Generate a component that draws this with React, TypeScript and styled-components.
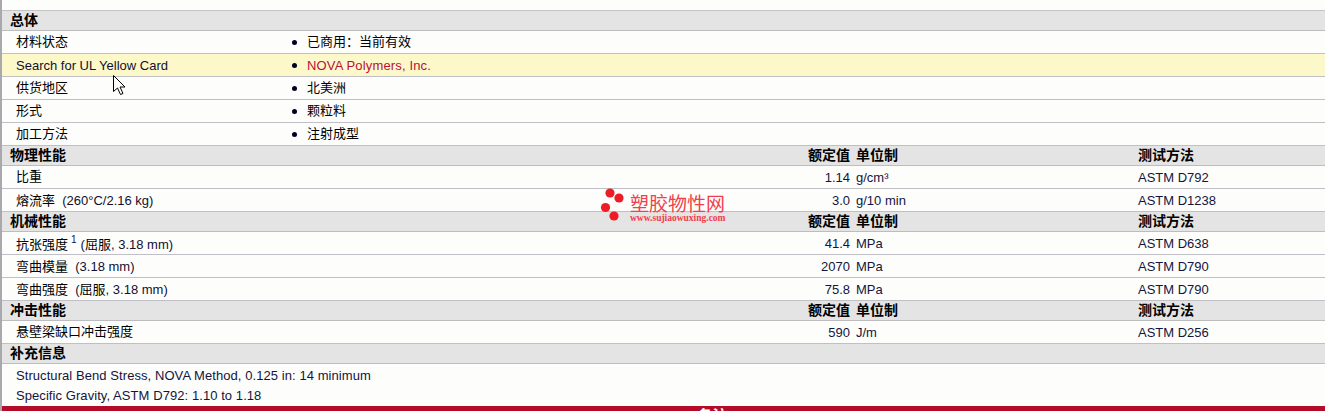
import styled, { createGlobalStyle } from "styled-components"

const GlobalStyle = createGlobalStyle`
    html, body {
        margin: 0;
        padding: 0;
        background: #fdfefc;
    }
`

const Page = styled.div`
    position: relative;
    width: 1325px;
    height: 411px;
    overflow: hidden;
    box-sizing: border-box;
    padding: 10px 0 0 2px;
    background: #fdfefc;
    font-family: "Liberation Sans", "Noto Sans CJK SC", sans-serif;
    font-size: 13px;
    color: #14143c;
`

const LeftEdge = styled.div`
    position: absolute;
    left: 0;
    top: 0;
    bottom: 0;
    width: 2px;
    background: #a9a9ad;
`

const Section = styled.div<{ $first?: boolean }>`
    display: grid;
    grid-template-columns: 690px 150px 288px 1fr;
    height: ${(p) => (p.$first ? "21px" : "20px")};
    box-sizing: border-box;
    align-items: center;
    padding: 0 0 3px 8px;
    background: #e4e4e4;
    border-top: ${(p) => (p.$first ? "1px solid #c4c4c6" : "0")};
    border-bottom: 1px solid #bdbdc0;
    font-family: "Noto Sans CJK SC", sans-serif;
    font-weight: 700;
    font-size: 14px;
    line-height: 16px;
    color: #000;
`

const HeadValue = styled.span`
    text-align: right;
    white-space: nowrap;
`

const HeadUnit = styled.span`
    padding-left: 6px;
    white-space: nowrap;
`

const InfoRow = styled.div<{ $highlight?: boolean }>`
    display: grid;
    grid-template-columns: 276px 1fr;
    height: 23px;
    box-sizing: border-box;
    align-items: center;
    padding-left: 14px;
    border-bottom: 1px solid #c0bfc6;
    background: ${(p) => (p.$highlight ? "#fdf8ca" : "transparent")};
`

const DataRow = styled.div`
    display: grid;
    grid-template-columns: 684px 150px 288px 1fr;
    height: 23px;
    box-sizing: border-box;
    align-items: center;
    padding-left: 14px;
    border-bottom: 1px solid #c0bfc6;
`

const Label = styled.span`
    color: #101030;
    white-space: nowrap;
`

const MixedLabel = styled(Label)`
    margin-bottom: 2px;
`

const CjkText = styled.span`
    font-family: "Noto Sans CJK SC", sans-serif;
    color: #000;
    margin-bottom: 3px;
`

const Sup = styled.sup`
    font-size: 10px;
    color: #14143c;
    line-height: 0;
    margin: 0 4px 0 3px;
`

const Bullet = styled.span`
    display: flex;
    align-items: center;
    gap: 10px;
    white-space: nowrap;

    &::before {
        content: "";
        width: 5px;
        height: 5px;
        border-radius: 50%;
        background: #000020;
    }
`

const Supplier = styled.span`
    color: #b8103a;
    letter-spacing: 0.15px;
`

const Value = styled.span`
    text-align: right;
    white-space: nowrap;
`

const Unit = styled.span`
    padding-left: 6px;
    white-space: nowrap;
`

const NoteGroup = styled.div`
    padding-top: 2px;
`

const Note = styled.div`
    height: 20px;
    line-height: 20px;
    padding-left: 14px;
    letter-spacing: 0.07px;
    white-space: nowrap;
`

const Footer = styled.div`
    position: absolute;
    left: 2px;
    right: 0;
    top: 406px;
    height: 20px;
    padding-left: 98px;
    background: #b40c28;
    color: #fff;
    text-align: center;
    font-family: "Noto Sans CJK SC", sans-serif;
    font-weight: 700;
    font-size: 15px;
    line-height: 18px;
`

const Watermark = styled.div`
    position: absolute;
    left: 600px;
    top: 188px;
    display: flex;
    gap: 4px;
    color: #f0404c;
`

const WatermarkText = styled.div`
    display: flex;
    flex-direction: column;
    padding-top: 4px;
`

const WatermarkName = styled.span`
    font-family: "Noto Sans CJK SC", sans-serif;
    font-size: 19px;
    line-height: 22px;
    font-weight: 400;
    white-space: nowrap;
`

const WatermarkUrl = styled.span`
    font-family: "Liberation Serif", serif;
    font-size: 9.5px;
    font-weight: 700;
    line-height: 9px;
    white-space: nowrap;
`

const Cursor = styled.svg`
    position: absolute;
    left: 113px;
    top: 75px;
`

function Dots() {
    return (
        <svg width="26" height="34" viewBox="0 0 26 34">
            <circle cx="10" cy="5" r="4.6" fill="#ee1c25" />
            <circle cx="19" cy="10" r="4.6" fill="#ee1c25" />
            <circle cx="5.5" cy="19.5" r="4.6" fill="#ee1c25" />
            <circle cx="14" cy="28" r="4.6" fill="#ee1c25" />
        </svg>
    )
}

const head = (
    <>
        <HeadValue>额定值</HeadValue>
        <HeadUnit>单位制</HeadUnit>
        <span>测试方法</span>
    </>
)

export default function App() {
    return (
        <Page>
            <GlobalStyle />
            <LeftEdge />
            <Section $first><span>总体</span></Section>
            <InfoRow><CjkText>材料状态</CjkText><Bullet><CjkText>已商用：当前有效</CjkText></Bullet></InfoRow>
            <InfoRow $highlight><Label>Search for UL Yellow Card</Label><Bullet><Supplier>NOVA Polymers, Inc.</Supplier></Bullet></InfoRow>
            <InfoRow><CjkText>供货地区</CjkText><Bullet><CjkText>北美洲</CjkText></Bullet></InfoRow>
            <InfoRow><CjkText>形式</CjkText><Bullet><CjkText>颗粒料</CjkText></Bullet></InfoRow>
            <InfoRow><CjkText>加工方法</CjkText><Bullet><CjkText>注射成型</CjkText></Bullet></InfoRow>

            <Section><span>物理性能</span>{head}</Section>
            <DataRow><CjkText>比重</CjkText><Value>1.14</Value><Unit>g/cm³</Unit><span>ASTM D792</span></DataRow>
            <DataRow><MixedLabel><CjkText>熔流率</CjkText>&nbsp; (260°C/2.16 kg)</MixedLabel><Value>3.0</Value><Unit>g/10 min</Unit><span>ASTM D1238</span></DataRow>

            <Section><span>机械性能</span>{head}</Section>
            <DataRow><Label><CjkText>抗张强度</CjkText><Sup>1</Sup>(<CjkText>屈服</CjkText>, 3.18 mm)</Label><Value>41.4</Value><Unit>MPa</Unit><span>ASTM D638</span></DataRow>
            <DataRow><MixedLabel><CjkText>弯曲模量</CjkText>&nbsp; (3.18 mm)</MixedLabel><Value>2070</Value><Unit>MPa</Unit><span>ASTM D790</span></DataRow>
            <DataRow><MixedLabel><CjkText>弯曲强度</CjkText>&nbsp; (<CjkText>屈服</CjkText>, 3.18 mm)</MixedLabel><Value>75.8</Value><Unit>MPa</Unit><span>ASTM D790</span></DataRow>

            <Section><span>冲击性能</span>{head}</Section>
            <DataRow><CjkText>悬壁梁缺口冲击强度</CjkText><Value>590</Value><Unit>J/m</Unit><span>ASTM D256</span></DataRow>

            <Section><span>补充信息</span></Section>
            <NoteGroup>
                <Note>Structural Bend Stress, NOVA Method, 0.125 in: 14 minimum</Note>
                <Note>Specific Gravity, ASTM D792: 1.10 to 1.18</Note>
            </NoteGroup>

            <Footer>备注</Footer>

            <Watermark>
                <Dots />
                <WatermarkText>
                    <WatermarkName>塑胶物性网</WatermarkName>
                    <WatermarkUrl>www.sujiaowuxing.com</WatermarkUrl>
                </WatermarkText>
            </Watermark>

            <Cursor width="13" height="21" viewBox="0 0 13 21">
                <path d="M0.5 0.5 L0.5 16.5 L4.5 13 L7.5 19.5 L10 18.5 L7 12 L12 12 Z" fill="#fff" stroke="#000" strokeWidth="1" />
            </Cursor>
        </Page>
    )
}
